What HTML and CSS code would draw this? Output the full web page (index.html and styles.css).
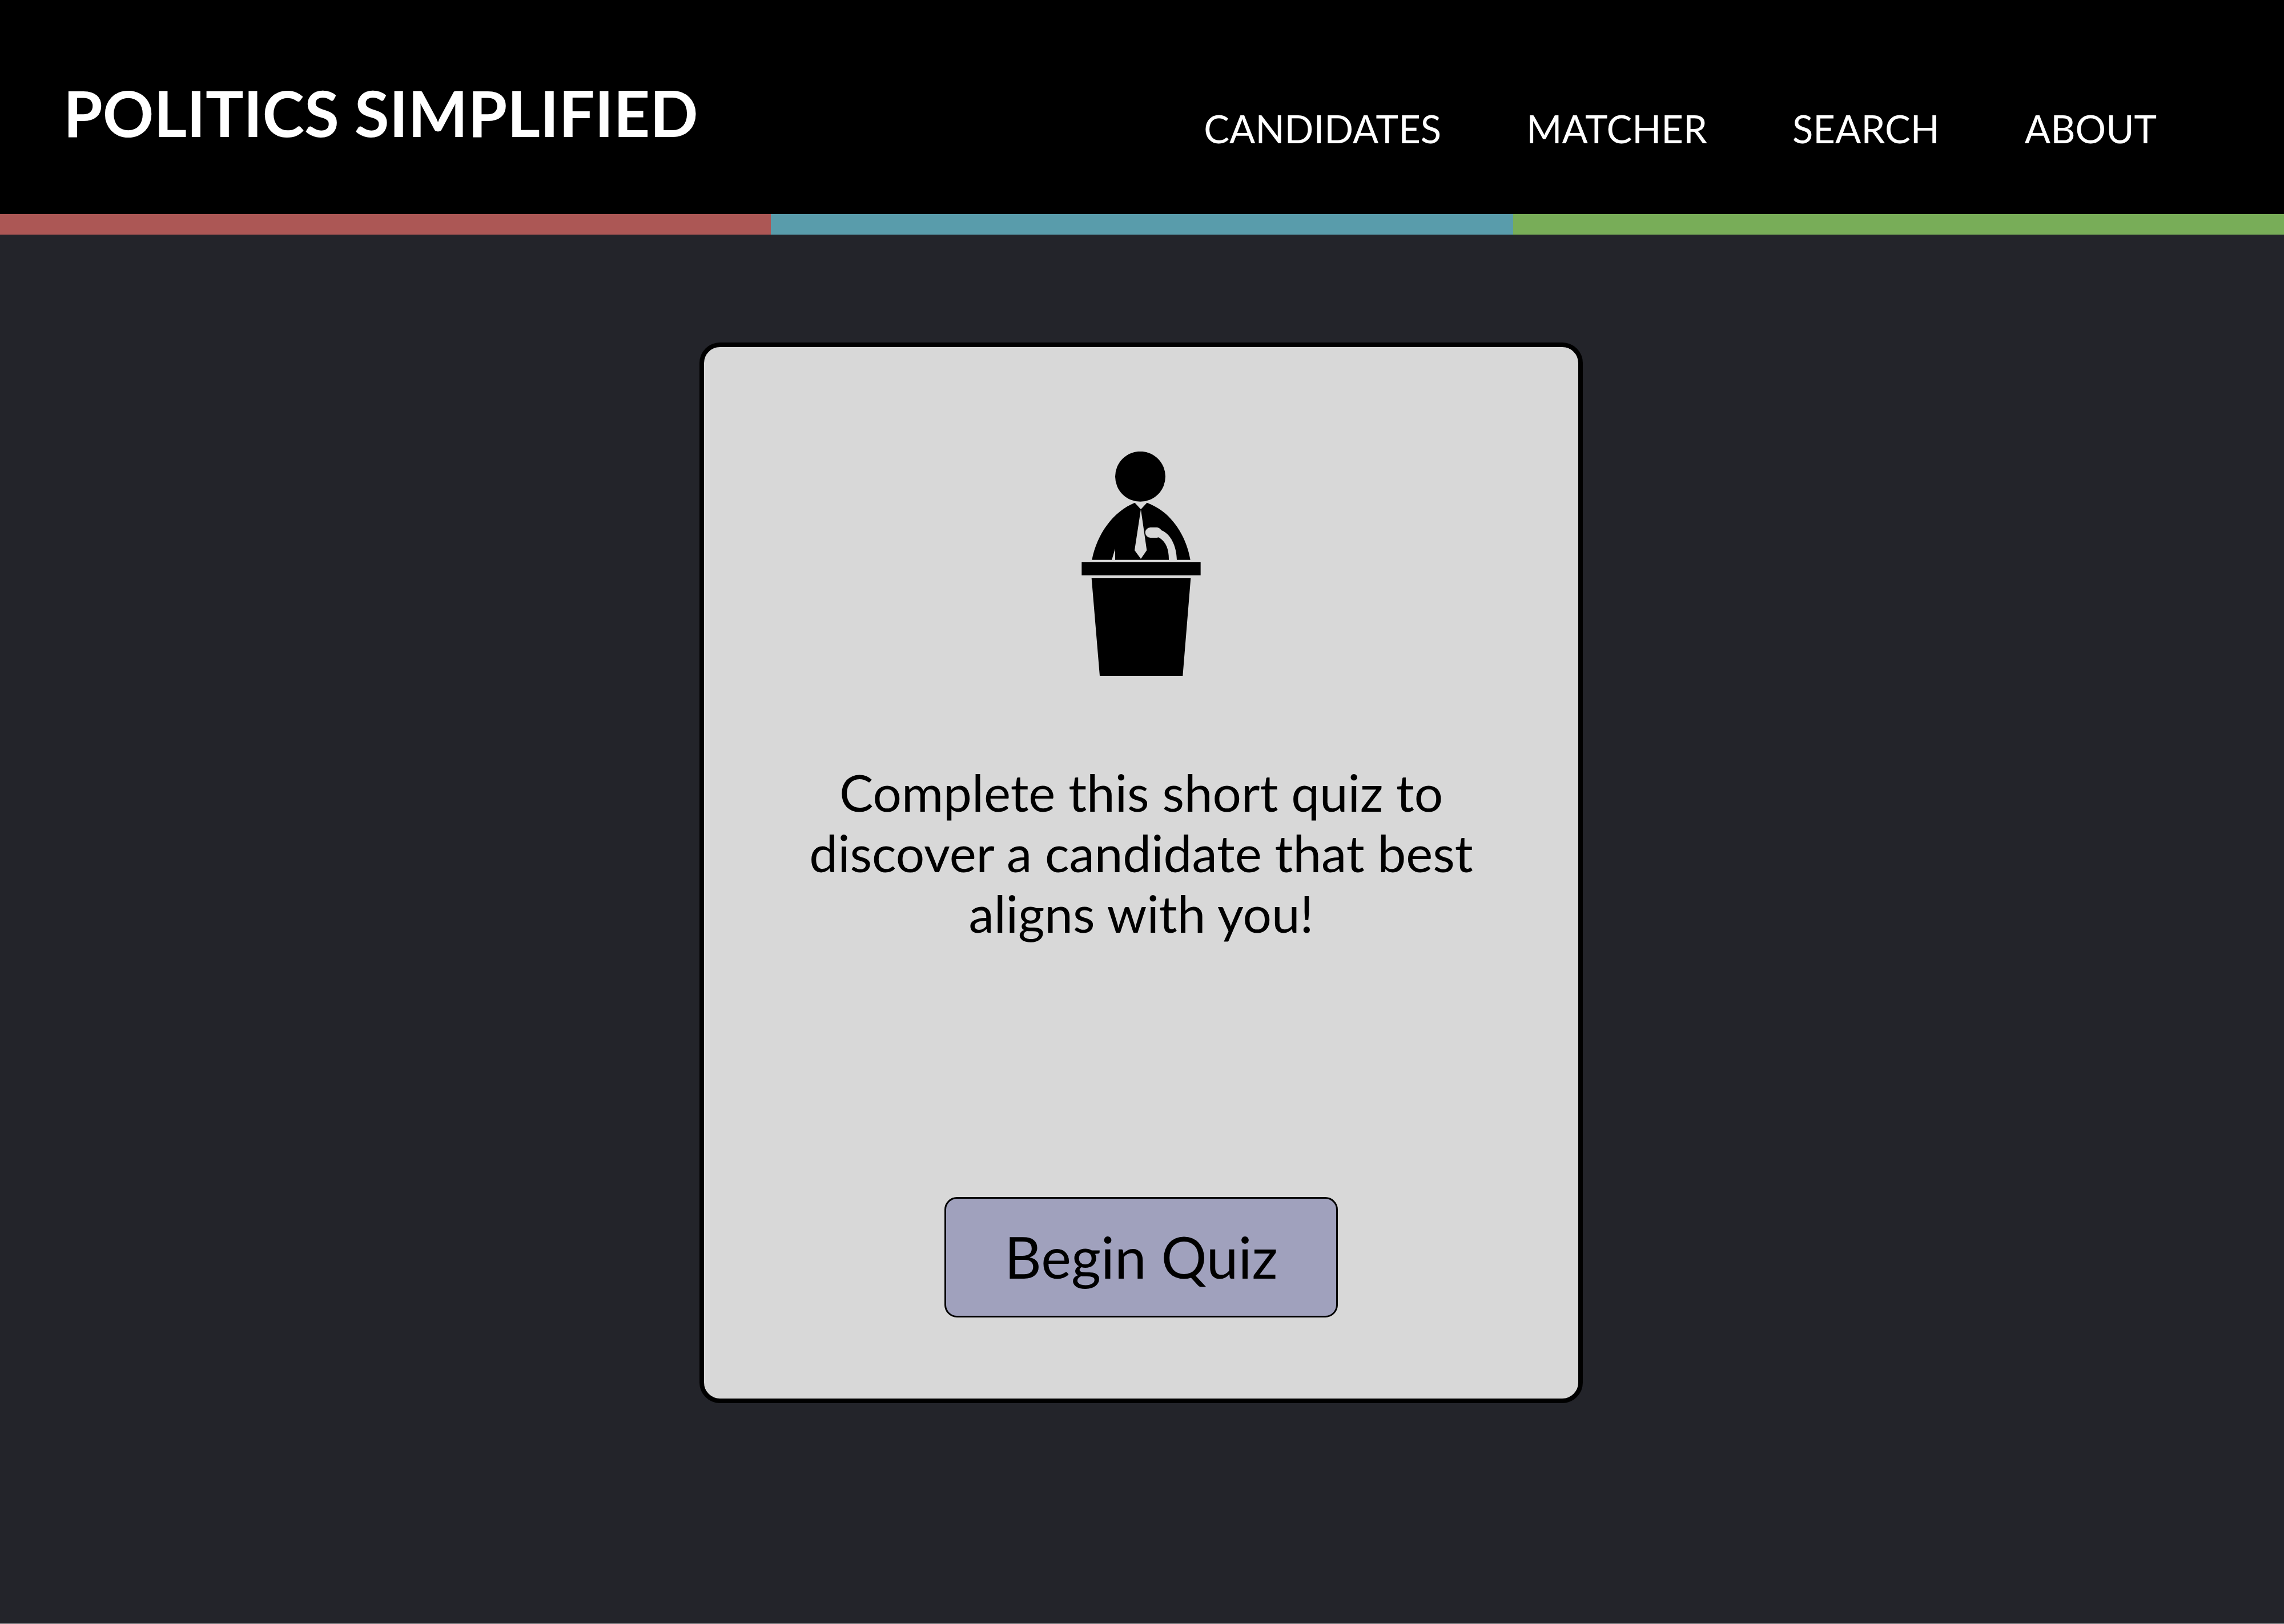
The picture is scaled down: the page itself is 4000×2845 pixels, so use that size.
FILE: index.html
```html
<!DOCTYPE html>
<html lang="en">
<head>
<meta charset="utf-8">
<title>Politics Simplified</title>
<link rel="stylesheet" href="styles.css">
</head>
<body>
<div class="page">
  <header class="header">
    <h1 class="brand">POLITICS SIMPLIFIED</h1>
    <nav class="nav">
      <a href="#candidates">CANDIDATES</a>
      <a href="#matcher">MATCHER</a>
      <a href="#search">SEARCH</a>
      <a href="#about">ABOUT</a>
    </nav>
  </header>
  <div class="stripe">
    <span class="stripe-red"></span>
    <span class="stripe-blue"></span>
    <span class="stripe-green"></span>
  </div>
  <main class="main">
    <section class="card">
      <svg class="speaker" viewBox="102 93 627 1179" aria-hidden="true">
        <circle cx="411" cy="224.500" r="132"/>
        <path d="M157 662C184 525 269 408 382 362L414 397L446 362C562 404 649 520 674 662Z"/>
        <path class="cut" d="M414 397L445 612L414 657L381 612ZM261 664L279 603V664Z"/>
        <path class="cut" d="M464 492H497Q511 492 522 507C570 525 602 590 603 664H561C562 602 543 563 506 544Q502 546 497 546H464A27 27 0 0 1 464 492Z"/>
        <path d="M103 675H728V744H103ZM155 759H676L634 1272H198Z"/>
      </svg>
      <p class="intro">Complete this short quiz to discover a candidate that best aligns with you!</p>
      <button class="begin" type="button">Begin Quiz</button>
    </section>
  </main>
</div>
</body>
</html>
```

FILE: styles.css
```css
* {
  box-sizing: border-box;
}

body {
  margin: 0;
  background: #a3a3a6;
  color: #000;
  font-family: Lato, "Liberation Sans", sans-serif;
}

.page {
  min-height: calc(100vh - 1px);
  background: #23242a;
}

.header {
  display: flex;
  justify-content: space-between;
  align-items: flex-end;
  padding: 129px 223px 110px 111px;
  background: #000;
  color: #fff;
}

.brand {
  margin: 0;
  font-size: 111px;
  line-height: 136px;
  font-weight: 700;
}

.nav {
  display: flex;
  gap: 149px;
}

.nav a {
  color: inherit;
  font-size: 67px;
  line-height: 80px;
  text-decoration: none;
}

.stripe {
  display: grid;
  grid-template-columns: 27fr 26fr 27fr;
  height: 36px;
}

.stripe-red {
  background: #ac5755;
}

.stripe-blue {
  background: #599cab;
}

.stripe-green {
  background: #78ad58;
}

.main {
  display: flex;
  justify-content: center;
  padding: 189px 3px 189px 0;
}

.card {
  display: flex;
  flex-direction: column;
  align-items: center;
  width: 1547px;
  max-width: 100%;
  padding: 183px 40px 142px;
  border: 8px solid #000;
  border-radius: 36px;
  background: #d8d8d8;
}

.speaker {
  width: 209px;
  height: 393px;
}

.cut {
  fill: #d8d8d8;
}

.intro {
  max-width: 1240px;
  margin: 151px 0 444px;
  font-size: 89px;
  line-height: 106px;
  text-align: center;
}

.begin {
  padding: 41px 102px 44px;
  border: 3px solid #000;
  border-radius: 22px;
  background: #a0a1bd;
  color: #000;
  font-family: inherit;
  font-size: 100px;
  line-height: 120px;
}
```
